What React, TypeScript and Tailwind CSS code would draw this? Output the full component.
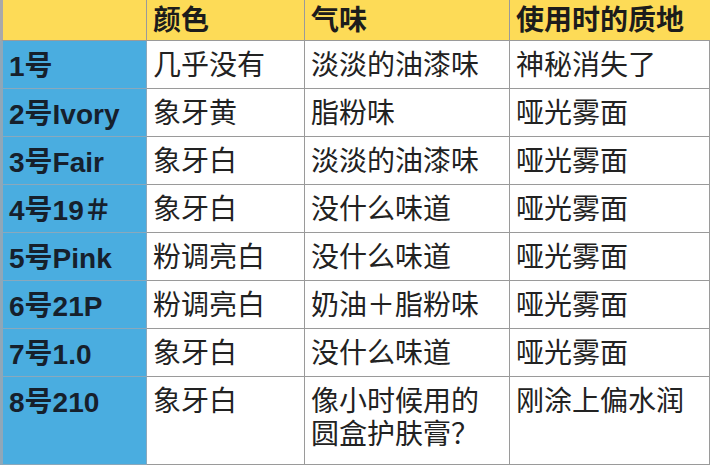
import React from "react";

const rows: [string, string, string[], string][] = [
  ["1号", "几乎没有", ["淡淡的油漆味"], "神秘消失了"],
  ["2号Ivory", "象牙黄", ["脂粉味"], "哑光雾面"],
  ["3号Fair", "象牙白", ["淡淡的油漆味"], "哑光雾面"],
  ["4号19＃", "象牙白", ["没什么味道"], "哑光雾面"],
  ["5号Pink", "粉调亮白", ["没什么味道"], "哑光雾面"],
  ["6号21P", "粉调亮白", ["奶油＋脂粉味"], "哑光雾面"],
  ["7号1.0", "象牙白", ["没什么味道"], "哑光雾面"],
  ["8号210", "象牙白", ["像小时候用的", "圆盒护肤膏？"], "刚涂上偏水润"],
];

const font = { fontFamily: '"Liberation Sans", "Noto Sans CJK SC", sans-serif' };

export default function App() {
  return (
    <div className="w-[713px] h-[469px] bg-white overflow-hidden" style={font}>
      <div className="grid grid-cols-[147px_158px_205px_200px] w-[710px] border-r border-[#9a9a9a]">
        {/* header */}
        <div className="h-[41px] bg-[#fddb57] border-b border-r border-[#9a9a9a] border-l-[3px] border-l-[#a9a9a9]" />
        {["颜色", "气味", "使用时的质地"].map((h, i) => (
          <div
            key={h}
            className={`h-[41px] bg-[#fddb57] border-b border-[#9a9a9a] pl-[6px] pt-[4px] text-[28px] leading-[33px] font-bold text-[#1c1c1c] ${i < 2 ? "border-r" : ""}`}
          >
            {h}
          </div>
        ))}
        {rows.map((r, idx) => {
          const last = idx === rows.length - 1;
          const h = last ? "h-[88px]" : "h-[48px]";
          return (
            <React.Fragment key={r[0]}>
              <div className={`${h} bg-[#4aade0] border-b border-r border-[#8aa8bc] border-l-[3px] border-l-[#8fa7b8] pl-[6px] pt-[9px] text-[28px] leading-[33px] font-bold text-[#16202c]`}>
                {r[0]}
              </div>
              <div className={`${h} border-b border-r border-[#9a9a9a] pl-[6px] pt-[8px] text-[28px] leading-[33px] text-[#222]`}>
                {r[1]}
              </div>
              <div className={`${h} border-b border-r border-[#9a9a9a] pl-[6px] pt-[8px] text-[28px] leading-[33px] text-[#222]`}>
                {r[2].map((t) => (
                  <div key={t}>{t}</div>
                ))}
              </div>
              <div className={`${h} border-b border-[#9a9a9a] pl-[6px] pt-[8px] text-[28px] leading-[33px] text-[#222]`}>
                {r[3]}
              </div>
            </React.Fragment>
          );
        })}
      </div>
    </div>
  );
}
